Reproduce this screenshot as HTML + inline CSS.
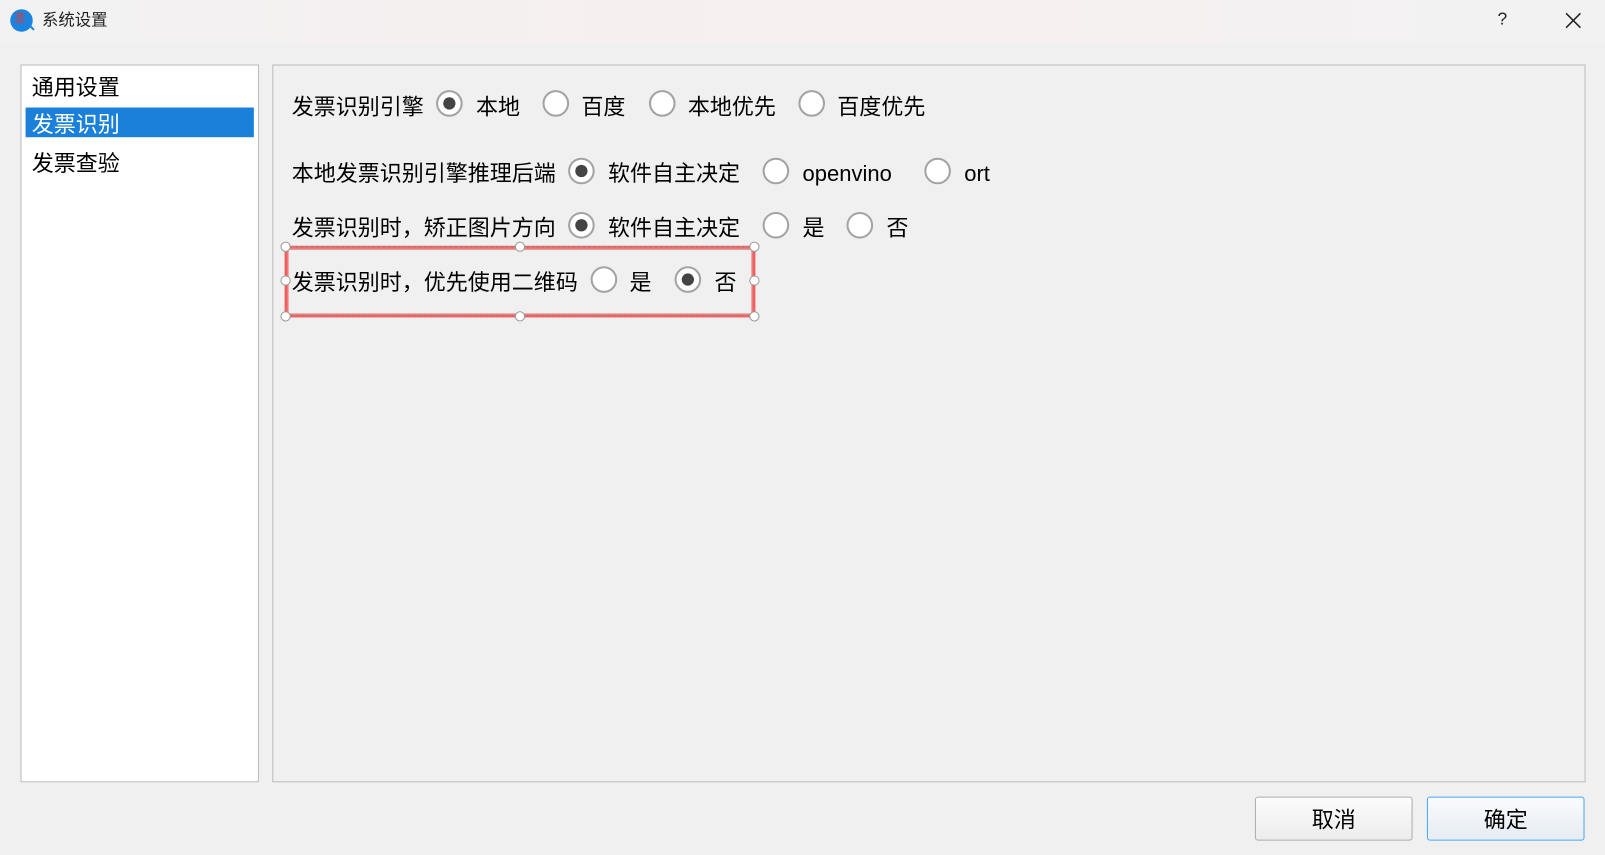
<!DOCTYPE html>
<html><head><meta charset="utf-8"><style>
html,body{margin:0;padding:0;width:1605px;height:855px;overflow:hidden;background:#f0f0f0;}
#w{position:absolute;left:0;top:0;width:1568px;height:835px;transform:scale(1.02360,1.02395);transform-origin:0 0;font-family:"Liberation Sans","Microsoft YaHei","Noto Sans CJK SC",sans-serif;color:#000;}
.t{position:absolute;font-size:21.5px;line-height:26px;white-space:nowrap;margin-top:2px;}
.r{position:absolute;width:22px;height:22px;border:2px solid #a3a3a3;border-radius:50%;background:#fff;box-sizing:content-box;}
.r.on::after{content:"";position:absolute;left:5px;top:5px;width:12px;height:12px;border-radius:50%;background:#444;}
.h{position:absolute;width:8px;height:8px;border:1.5px solid #999;border-radius:50%;background:#fff;}
</style></head><body><div id="w">
<div style="position:absolute;left:0;top:0;width:1568px;height:42px;background:linear-gradient(90deg,#f2f2f3 0%,#f6efef 40%,#f7f0f0 55%,#f2f2f3 100%);"></div>
<div style="position:absolute;left:10px;top:9px;width:22px;height:22px;border-radius:50%;background:#1a84e0;"></div>
<div style="position:absolute;left:14px;top:11px;font-size:11px;color:#d04040;line-height:16px;">票</div>
<div style="position:absolute;left:28px;top:26px;width:6px;height:2px;background:#1a84e0;transform:rotate(45deg);"></div>
<div style="position:absolute;left:41px;top:10px;font-size:16px;line-height:22px;color:#222;">系统设置</div>
<div style="position:absolute;left:1463px;top:9px;font-size:17px;color:#222;">?</div>
<svg style="position:absolute;left:1528px;top:11px" width="18" height="18"><path d="M2 2L16 16M16 2L2 16" stroke="#222" stroke-width="1.5"/></svg>

<div style="position:absolute;left:20px;top:63px;width:231px;height:699px;background:#fff;border:1px solid #bcbcbc;"></div>
<div style="position:absolute;left:25px;top:105px;width:223px;height:29px;background:#1a80d9;"></div>
<div class="t" style="left:31px;top:71px;">通用设置</div>
<div class="t" style="left:31px;top:107px;color:#fff;">发票识别</div>
<div class="t" style="left:31px;top:145px;">发票查验</div>

<div style="position:absolute;left:266px;top:63px;width:1281px;height:699px;border:1px solid #bcbcbc;"></div>

<div class="t" style="left:285px;top:90px;">发票识别引擎</div>
<div class="r on" style="left:426px;top:88px"></div><div class="t" style="left:465px;top:90px;">本地</div>
<div class="r" style="left:530px;top:88px"></div><div class="t" style="left:568px;top:90px;">百度</div>
<div class="r" style="left:634px;top:88px"></div><div class="t" style="left:672px;top:90px;">本地优先</div>
<div class="r" style="left:780px;top:88px"></div><div class="t" style="left:818px;top:90px;">百度优先</div>

<div class="t" style="left:285px;top:155px;">本地发票识别引擎推理后端</div>
<div class="r on" style="left:555px;top:154px"></div><div class="t" style="left:594px;top:155px;">软件自主决定</div>
<div class="r" style="left:745px;top:154px"></div><div class="t" style="left:784px;top:155px;">openvino</div>
<div class="r" style="left:903px;top:154px"></div><div class="t" style="left:942px;top:155px;">ort</div>

<div class="t" style="left:285px;top:208px;">发票识别时，矫正图片方向</div>
<div class="r on" style="left:555px;top:207px"></div><div class="t" style="left:594px;top:208px;">软件自主决定</div>
<div class="r" style="left:745px;top:207px"></div><div class="t" style="left:784px;top:208px;">是</div>
<div class="r" style="left:827px;top:207px"></div><div class="t" style="left:866px;top:208px;">否</div>

<div style="position:absolute;left:278px;top:240px;width:454px;height:64px;border:3px solid #f06060;box-shadow:inset 0 0 0 1px #e88;"></div>
<div style="position:absolute;left:281px;top:241px;width:454px;height:0;border-top:1px dashed #999;"></div>
<div style="position:absolute;left:281px;top:307px;width:454px;height:0;border-top:1px dashed #999;"></div>
<div class="t" style="left:285px;top:261px;">发票识别时，优先使用二维码</div>
<div class="r" style="left:577px;top:260px"></div><div class="t" style="left:615px;top:261px;">是</div>
<div class="r on" style="left:659px;top:260px"></div><div class="t" style="left:698px;top:261px;">否</div>
<div class="h" style="left:274px;top:236px"></div><div class="h" style="left:503px;top:236px"></div><div class="h" style="left:732px;top:236px"></div>
<div class="h" style="left:274px;top:269px"></div><div class="h" style="left:732px;top:269px"></div>
<div class="h" style="left:274px;top:304px"></div><div class="h" style="left:503px;top:304px"></div><div class="h" style="left:732px;top:304px"></div>

<div style="position:absolute;left:1226px;top:778px;width:152px;height:41px;border:1px solid #adadad;border-radius:3px;background:linear-gradient(#fcfcfc,#ececec);text-align:center;font-size:21.5px;line-height:45px;">取消</div>
<div style="position:absolute;left:1394px;top:778px;width:152px;height:41px;border:1px solid #47a7f5;border-radius:3px;background:linear-gradient(#fafbfd,#e5ecf3);text-align:center;font-size:21.5px;line-height:45px;">确定</div>
</div></body></html>
